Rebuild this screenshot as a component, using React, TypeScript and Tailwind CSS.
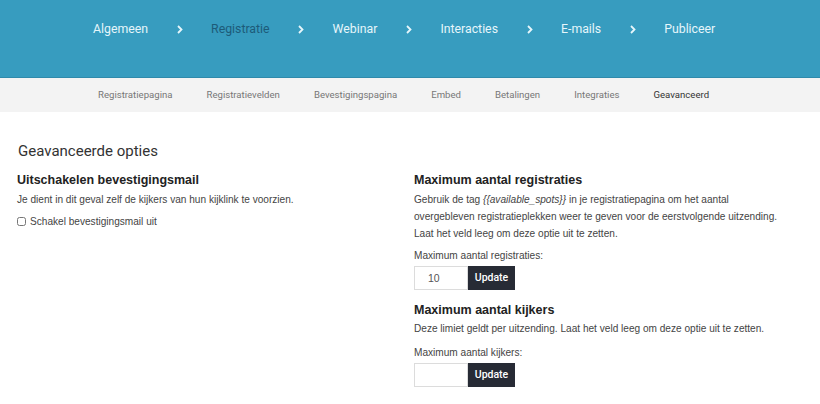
import React from "react";

const steps = ["Algemeen", "Registratie", "Webinar", "Interacties", "E-mails", "Publiceer"];
const tabs = [
  "Registratiepagina",
  "Registratievelden",
  "Bevestigingspagina",
  "Embed",
  "Betalingen",
  "Integraties",
  "Geavanceerd",
];

const Chevron = () => (
  <svg width="6" height="9" viewBox="0 0 6 9" className="shrink-0">
    <path d="M1 1l3.5 3.5L1 8" fill="none" stroke="#e6f6fb" strokeWidth="1.8" />
  </svg>
);

const UpdateField = ({ value }: { value?: string }) => (
  <div className="flex">
    <input
      defaultValue={value}
      className="w-[54px] h-[24px] border border-[#dcdcdc] px-[13px] text-[10.5px] text-[#555] outline-none"
    />
    <button className="h-[24px] w-[47px] bg-[#272b35] text-white text-[10.5px] font-[Roboto,sans-serif] font-medium">
      Update
    </button>
  </div>
);

export default function App() {
  return (
    <div className="w-[820px] h-[404px] bg-white overflow-hidden font-['Liberation_Sans',Arial,sans-serif] text-[#333]">
      <div className="h-[78px] bg-[#379cbf] border-b border-[#2f8aab] pt-[20px]">
        <div className="flex items-center gap-[28.5px] pl-[93px] font-[Roboto,sans-serif] text-[12.3px] leading-[18px]">
          {steps.map((s, i) => (
            <React.Fragment key={s}>
              <span className={s === "Registratie" ? "text-[#1d5b79]" : "text-[#e6f6fb]"}>{s}</span>
              {i < steps.length - 1 && <Chevron />}
            </React.Fragment>
          ))}
        </div>
      </div>
      <div className="h-[34px] bg-[#f3f3f3] flex items-center pl-[98px] gap-[34px] font-[Roboto,sans-serif] text-[9.6px]">
        {tabs.map((t) => (
          <span key={t} className={t === "Geavanceerd" ? "text-[#333]" : "text-[#777]"}>
            {t}
          </span>
        ))}
      </div>
      <div className="pl-[17px] pt-[29px]">
        <h2 className="text-[15px] leading-[20px] text-[#333] font-[Roboto,sans-serif] pl-px">Geavanceerde opties</h2>
        <div className="flex mt-[11px]">
          <div className="w-[397px]">
            <h3 className="text-[12.5px] font-bold text-[#222] leading-[16px]">Uitschakelen bevestigingsmail</h3>
            <p className="text-[10.1px] text-[#444] mt-[4px] leading-[16px]">
              Je dient in dit geval zelf de kijkers van hun kijklink te voorzien.
            </p>
            <label className="flex items-center gap-[4px] mt-[6px] text-[10.1px] text-[#444]">
              <input type="checkbox" className="w-[9px] h-[9px] m-0 accent-[#ccc]" />
              Schakel bevestigingsmail uit
            </label>
          </div>
          <div className="w-[400px]">
            <h3 className="text-[12.5px] font-bold text-[#222] leading-[16px]">Maximum aantal registraties</h3>
            <p className="text-[10.1px] text-[#444] mt-[3px] leading-[17px]">
              Gebruik de tag <i>{"{{available_spots}}"}</i> in je registratiepagina om het aantal
              <br />
              overgebleven registratieplekken weer te geven voor de eerstvolgende uitzending.
              <br />
              Laat het veld leeg om deze optie uit te zetten.
            </p>
            <p className="text-[10.1px] text-[#444] mt-[6px] leading-[16px]">Maximum aantal registraties:</p>
            <div className="mt-[2px]">
              <UpdateField value="10" />
            </div>
            <h3 className="text-[12.5px] font-bold text-[#222] leading-[16px] mt-[12px]">Maximum aantal kijkers</h3>
            <p className="text-[10.1px] text-[#444] mt-[2px] leading-[17px]">
              Deze limiet geldt per uitzending. Laat het veld leeg om deze optie uit te zetten.
            </p>
            <p className="text-[10.1px] text-[#444] mt-[8px] leading-[16px]">Maximum aantal kijkers:</p>
            <div className="mt-[2px]">
              <UpdateField />
            </div>
          </div>
        </div>
      </div>
    </div>
  );
}
